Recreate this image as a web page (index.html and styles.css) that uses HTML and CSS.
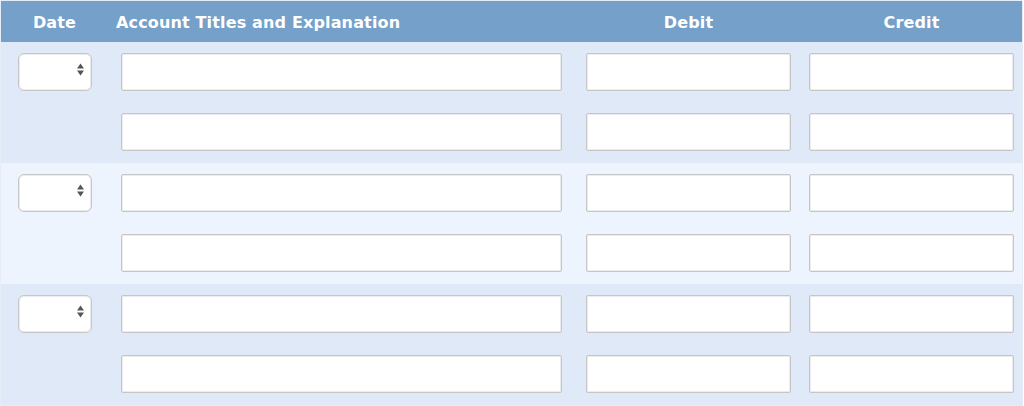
FILE: index.html
```html
<!DOCTYPE html>
<html lang="en">
<head>
<meta charset="utf-8">
<title>Journal Entry</title>
<link rel="stylesheet" href="styles.css">
</head>
<body>
<div class="journal">
  <div class="head">
    <div class="hcell hdate">Date</div>
    <div class="hcell hacct">Account Titles and Explanation</div>
    <div class="hcell hamt"><span>Debit</span></div>
    <div class="hcell hamt hcredit"><span>Credit</span></div>
  </div>

  <div class="group">
    <div class="cdate"><div class="sel"><select class="datesel"><option></option></select><svg class="arrows" width="7" height="13" viewBox="0 0 7 13"><path d="M3.5 0.5 L7 5.5 L0 5.5 Z M0 7.5 L7 7.5 L3.5 12.5 Z" fill="#555"/></svg></div></div>
    <div class="cacct"><input type="text" class="field"></div>
    <div class="camt"><input type="text" class="field"></div>
    <div class="camt ccredit"><input type="text" class="field"></div>
    <div class="cacct r2"><input type="text" class="field"></div>
    <div class="camt r2"><input type="text" class="field"></div>
    <div class="camt ccredit r2"><input type="text" class="field"></div>
  </div>

  <div class="group alt">
    <div class="cdate"><div class="sel"><select class="datesel"><option></option></select><svg class="arrows" width="7" height="13" viewBox="0 0 7 13"><path d="M3.5 0.5 L7 5.5 L0 5.5 Z M0 7.5 L7 7.5 L3.5 12.5 Z" fill="#555"/></svg></div></div>
    <div class="cacct"><input type="text" class="field"></div>
    <div class="camt"><input type="text" class="field"></div>
    <div class="camt ccredit"><input type="text" class="field"></div>
    <div class="cacct r2"><input type="text" class="field"></div>
    <div class="camt r2"><input type="text" class="field"></div>
    <div class="camt ccredit r2"><input type="text" class="field"></div>
  </div>

  <div class="group">
    <div class="cdate"><div class="sel"><select class="datesel"><option></option></select><svg class="arrows" width="7" height="13" viewBox="0 0 7 13"><path d="M3.5 0.5 L7 5.5 L0 5.5 Z M0 7.5 L7 7.5 L3.5 12.5 Z" fill="#555"/></svg></div></div>
    <div class="cacct"><input type="text" class="field"></div>
    <div class="camt"><input type="text" class="field"></div>
    <div class="camt ccredit"><input type="text" class="field"></div>
    <div class="cacct r2"><input type="text" class="field"></div>
    <div class="camt r2"><input type="text" class="field"></div>
    <div class="camt ccredit r2"><input type="text" class="field"></div>
  </div>
</div>
</body>
</html>
```

FILE: styles.css
```css
* { box-sizing: border-box; }

html, body {
  margin: 0;
  padding: 0;
  background: #ffffff;
}

body {
  font-family: "DejaVu Sans", Verdana, sans-serif;
  width: 1024px;
}

.journal {
  width: 1023px;
  border: 1px solid #e6edf6;
}

.head,
.group {
  display: grid;
  grid-template-columns: 107px 467px 223px 224px;
}

.head {
  height: 41px;
  background: #74a0c9;
  color: #ffffff;
  font-weight: bold;
  font-size: 16px;
  letter-spacing: 0.15px;
  align-items: center;
}

.hcell {
  line-height: 41px;
  padding-top: 1px;
  white-space: nowrap;
}

.hdate {
  text-align: center;
}

.hacct {
  padding-left: 8px;
}

.hamt {
  padding-left: 11px;
}

.hamt span {
  display: block;
  width: 205px;
  text-align: center;
}

.group {
  background: #dfe9f7;
  grid-template-rows: 38px 38px;
  row-gap: 22px;
  padding: 11px 0 12px;
}

.group.alt {
  background: #edf4fe;
}

.cdate {
  grid-row: 1;
  grid-column: 1;
  padding-left: 17px;
}

.cacct {
  grid-column: 2;
  padding-left: 13px;
}

.camt {
  grid-column: 3;
  padding-left: 11px;
}

.camt.ccredit {
  grid-column: 4;
}

.r2 {
  grid-row: 2;
}

.field {
  display: block;
  margin: 0;
  height: 38px;
  border: 1px solid #c6c6c6;
  border-radius: 2px;
  background: #ffffff;
  box-shadow: inset 0 0 0 1px #ececec;
  font: inherit;
  padding: 0 6px;
  outline: none;
}

.cacct .field {
  width: 441px;
}

.camt .field {
  width: 205px;
}

.sel {
  position: relative;
  width: 74px;
  height: 38px;
}

.datesel {
  appearance: none;
  -webkit-appearance: none;
  display: block;
  margin: 0;
  width: 74px;
  height: 38px;
  border: 1px solid #c6c6c6;
  border-radius: 6px;
  background: #ffffff;
  box-shadow: inset 0 0 0 1px #ececec;
  font: inherit;
  outline: none;
}

.arrows {
  position: absolute;
  left: 59px;
  top: 10px;
}
```
